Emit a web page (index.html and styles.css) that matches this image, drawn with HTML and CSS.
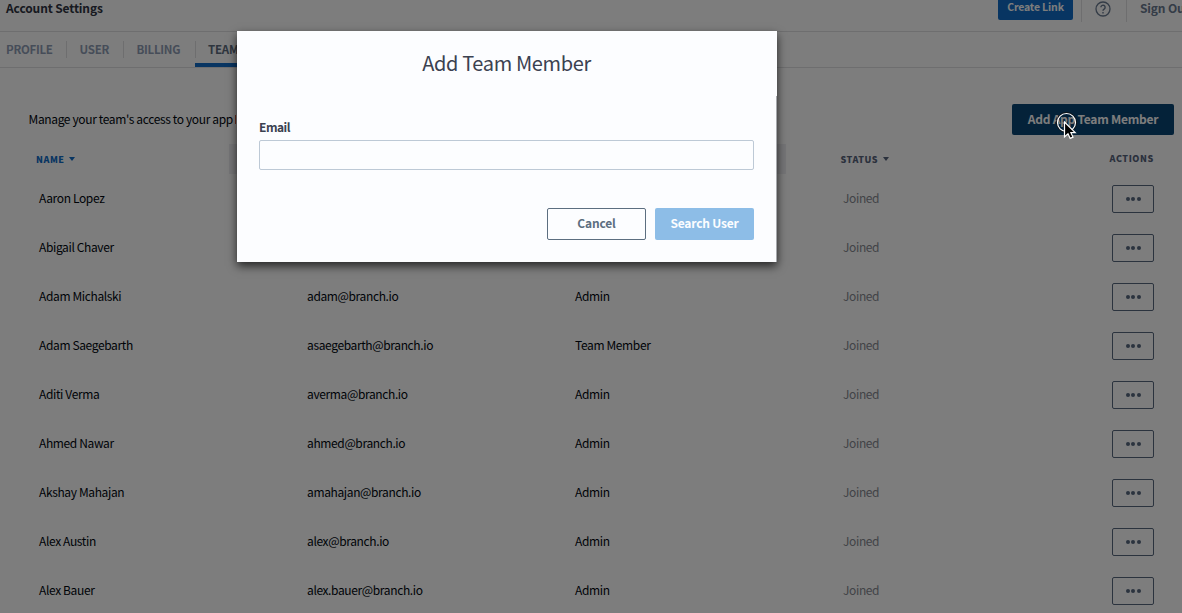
FILE: index.html
```
<!DOCTYPE html>
<html lang="en">
<head>
<meta charset="utf-8">
<title>Account Settings</title>
<link rel="stylesheet" href="styles.css">
</head>
<body>
<div class="page">
  <header class="topbar">
    <h1 class="title">Account Settings</h1>
    <div class="topbar-right">
      <button class="create">Create Link</button>
      <span class="help"><svg width="16" height="16" viewBox="0 0 16 16" fill="none" stroke="#68788e" stroke-width="1.3"><circle cx="8" cy="8" r="7"/><path d="M5.9 6.3a2.1 2.1 0 1 1 3.2 1.8C8.3 8.6 8 8.9 8 9.8M8 11v1.4" stroke-width="1.4"/></svg></span>
      <span class="signout">Sign Out</span>
    </div>
  </header>
  <nav class="tabs">
    <span class="tab">PROFILE</span>
    <span class="tab">USER</span>
    <span class="tab">BILLING</span>
    <span class="tab active">TEAM</span>
  </nav>
  <main class="content">
    <div class="intro">
      <p class="desc">Manage your team's access to your app <i class="mark"></i></p>
      <button class="add">Add App Team Member</button>
    </div>
    <div class="grid head">
      <span class="h-name">NAME <i class="caret"></i></span>
      <span class="h-mid"></span>
      <span class="h-status">STATUS <i class="caret"></i></span>
      <span class="h-actions">ACTIONS</span>
    </div>
    <div id="rows"></div>
  </main>
</div>
<div class="overlay">
  <section class="modal">
    <h2 class="modal-title">Add Team Member</h2>
    <div class="modal-body">
      <label class="label" for="email">Email</label>
      <input class="input" id="email">
      <div class="buttons">
        <button class="btn cancel">Cancel</button>
        <button class="btn search">Search User</button>
      </div>
    </div>
  </section>
</div>
<svg class="cursor" width="26" height="32" viewBox="0 0 26 32"><circle cx="12.5" cy="11.5" r="10" fill="none" stroke="#111" stroke-width="1"/><circle cx="12.5" cy="11.5" r="9" fill="none" stroke="#fff" stroke-width="1.2"/><path d="M10.500 11v15l3.500-3.200 2.200 4.600 2.800-1.300-2.100-4.400h4.300z" fill="#000" stroke="#fff" stroke-width="1.2"/></svg>
<script src="rows.js"></script>
</body>
</html>
```
FILE: styles.css
```
* { box-sizing: border-box; }
body {
  margin: 0;
  width: 1182px;
  height: 613px;
  overflow: hidden;
  position: relative;
  background: #fafafa;
  color: #00060f;
  font: 12px/20px "Noto Sans CJK SC", "Noto Sans CJK JP", sans-serif;
  letter-spacing: -.37px;
}
h1, h2, p { margin: 0; }
button { font-family: inherit; padding: 0; border: 0; border-radius: 2px; }
.page { width: 1182px; height: 613px; overflow: hidden; }
.topbar { height: 32px; display: flex; justify-content: space-between; border-bottom: 1px solid #dcdcde; }
.title { padding: 0 0 0 6px; margin-top: -2px; font-size: 12px; font-weight: 700; letter-spacing: -.13px; line-height: 20px; color: #2e3240; }
.topbar-right { display: flex; width: 184px; height: 22px; }
.create { width: 75px; height: 26px; margin-top: -6px; padding-bottom: 2px; flex: none; background: #106bc4; color: #fafafa; font-size: 10.5px; font-weight: 700; letter-spacing: -.15px; }
.help { margin-left: 8px; width: 46px; flex: none; border: solid #dcdcde; border-width: 0 1px; display: flex; justify-content: center; padding: 1px 2px 0 0; }
.signout { margin: -2px 0 0 13px; white-space: nowrap; letter-spacing: -.15px; font-weight: 700; color: #68788e; }
.tabs { height: 36px; display: flex; border-bottom: 1px solid #dcdcde; }
.tab { position: relative; padding: 7px 14px 0 13.5px; font-size: 11.5px; font-weight: 700; letter-spacing: -.28px; color: #8d9bb2; height: 35px; }
.tab:first-child { padding-left: 6px; padding-right: 13.4px; }
.tab:nth-child(3) { padding-right: 14.5px; }
.tab + .tab::before { content: ""; position: absolute; left: 0; top: 9px; height: 17px; border-left: 1px solid #dcdcde; }
.active { color: #5d6b7c; border-bottom: 4px solid #106bc4; width: 80px; }
.intro { padding: 36px 8px 0 28.5px; display: flex; justify-content: space-between; align-items: flex-start; }
.desc { padding-top: 5px; letter-spacing: -.36px; }
.mark { display: inline-block; width: 1px; height: 9px; background: #d0583c; }
.add { width: 162px; height: 31px; padding-bottom: 2px; background: #084472; color: #fafafa; font-size: 12px; font-weight: 700; letter-spacing: -.25px; }
.grid { display: grid; grid-template-columns: 307px 268px 268px 269px 42px; align-items: center; }
.head { grid-template-columns: 229px 557px 1fr 100px; height: 30px; margin-top: 9px; font-size: 9px; font-weight: 900; letter-spacing: .55px; color: #56637a; }
.h-name { padding: 2px 0 0 36px; color: #106bc4; }
.h-mid { height: 30px; background: #eaeaee; }
.h-status { padding: 2px 0 0 54.5px; }
.h-actions { padding-left: 27.5px; }
.caret { display: inline-block; margin-left: 2px; vertical-align: 2px; border: 3.5px solid transparent; border-top: 4px solid currentColor; border-bottom: 0; }
.row { height: 49px; }
.row > span:not(.more) { padding-bottom: 1px; }
.row .name { padding-left: 39px; }
.row .joined { color: #84878f; }
.more { width: 42px; height: 28px; border: 1px solid #56667c; border-radius: 2px; display: flex; justify-content: center; align-items: center; gap: 1.5px; }
.more i { width: 4px; height: 4px; border-radius: 50%; background: #56667c; }
.overlay { position: absolute; inset: 0; background: rgba(0, 0, 0, .5); padding: 31px 0 0 237px; }
.modal { width: 540px; height: 231px; background: #fcfdff; box-shadow: 0 4px 9px rgba(0, 0, 0, .7); }
.modal-title { height: 65px; text-align: center; font-size: 20px; font-weight: 400; letter-spacing: -.35px; line-height: 64px; padding-right: 1px; color: #3b4150; }
.modal-body { height: 166px; padding: 22px 22px 0; border-right: 1px solid #a5a7ab; }
.label { display: block; margin-top: -1px; font-weight: 700; line-height: 20px; letter-spacing: -.5px; color: #3b4150; }
.input { display: block; width: 495px; height: 30px; margin-top: 3px; border: 1px solid #bdc9d6; border-radius: 2px; background: none; }
.buttons { display: flex; justify-content: flex-end; gap: 9px; margin-top: 38px; }
.btn { width: 99px; height: 32px; padding-bottom: 3px; font-size: 12px; font-weight: 700; letter-spacing: -.18px; }
.cancel { background: none; border: 1px solid #5c6e80; color: #5c6e80; }
.search { background: #8dbde7; color: #fcfdff; }
.cursor { position: absolute; left: 1054px; top: 111px; }
```
FILE: rows.js
```
const people = [
  ["Aaron Lopez", "", ""],
  ["Abigail Chaver", "", ""],
  ["Adam Michalski", "adam@branch.io", "Admin"],
  ["Adam Saegebarth", "asaegebarth@branch.io", "Team Member"],
  ["Aditi Verma", "averma@branch.io", "Admin"],
  ["Ahmed Nawar", "ahmed@branch.io", "Admin"],
  ["Akshay Mahajan", "amahajan@branch.io", "Admin"],
  ["Alex Austin", "alex@branch.io", "Admin"],
  ["Alex Bauer", "alex.bauer@branch.io", "Admin"]
];
document.getElementById("rows").innerHTML = people.map(([name, email, role]) =>
  `<div class="grid row"><span class="name">${name}</span><span>${email}</span><span>${role}</span><span class="joined">Joined</span><span class="more"><i></i><i></i><i></i></span></div>`
).join("");
```
